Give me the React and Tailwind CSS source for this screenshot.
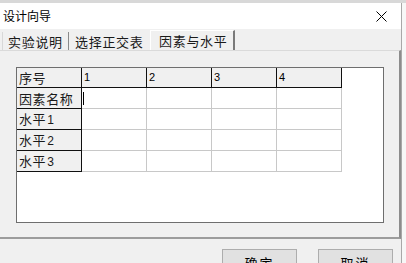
import React from 'react';

const cjk = "font-['Noto_Sans_CJK_SC',sans-serif]";
const cols = ['1', '2', '3', '4'];
const rows = [
    { label: '因素名称' },
    { label: '水平', n: '1' },
    { label: '水平', n: '2' },
    { label: '水平', n: '3' },
];

const FixedCell = ({ children, h }) => (
    <div className={`w-[65px] ${h} shrink-0 bg-[#f0f0f0] border-r border-b border-[#101010] pl-[2px] flex items-center text-[13px] tracking-[0.6px] leading-none text-[#1a1a1a]`}>
        <span>{children}</span>
    </div>
);

const App = () => {
    return (
        <div className={`w-[406px] h-[263px] overflow-hidden bg-[#f7f7f7] ${cjk}`}>
            <div className="h-[3px] bg-[#d8d8d8]" />
            <div className="w-[402px] border-r border-[#a8a8a8]">
                {/* title */}
                <div className="h-[26px] bg-white flex items-center justify-between pl-[3px] pr-[14px]">
                    <span className="text-[12px] leading-none text-black">设计向导</span>
                    <svg width="11" height="11" viewBox="0 0 11 11">
                        <path d="M0.5 0.5 L10.5 10.5 M10.5 0.5 L0.5 10.5" stroke="#000" strokeWidth="1" />
                    </svg>
                </div>
                {/* tabs */}
                <div className="h-[21px] bg-[#f0f0f0] flex items-end pl-[2px] text-[13px] tracking-[0.7px] leading-none text-[#1a1a1a]">
                    <div className="w-[67px] h-[18px] pl-[5px] flex items-center border-l border-l-[#d8d8d8] border-r border-r-[#8a8a8a]">实验说明</div>
                    <div className="w-[81px] h-[18px] pl-[6px] flex items-center">选择正交表</div>
                    <div className="w-[85px] h-[20px] pl-[8px] flex items-center border-l border-l-white border-t border-t-white border-r-2 border-r-[#7a7a7a]">因素与水平</div>
                </div>
                {/* panel */}
                <div className="w-[401px] h-[189px] bg-[#f0f0f0] border-t border-[#dadada] border-r-2 border-r-[#8c8c8c] border-b-2 border-b-[#9c9c9c] pt-[16px] pl-[16px]">
                    <div className="w-[368px] h-[156px] bg-white border border-[#6e6e6e]">
                        <div className="flex">
                            <FixedCell h="h-[20px]">序号</FixedCell>
                            {cols.map(c => (
                                <div key={c} className="w-[65px] h-[20px] bg-[#f0f0f0] border-r border-b border-[#101010] pl-[2px] flex items-center font-['Liberation_Sans',sans-serif] text-[11px] leading-none text-black">{c}</div>
                            ))}
                        </div>
                        {rows.map((r, i) => (
                            <div key={i} className="flex">
                                <FixedCell h="h-[21px]">
                                    {r.label}
                                    {r.n && <span className="font-['Liberation_Sans',sans-serif] text-[12px] tracking-normal ml-[1px]">{r.n}</span>}
                                </FixedCell>
                                {cols.map(c => (
                                    <div key={c} className="w-[65px] h-[21px] border-r border-b border-[#c8c8c8] pl-[1px] flex items-center">
                                        {i === 0 && c === '1' && <div className="w-px h-[13px] bg-black" />}
                                    </div>
                                ))}
                            </div>
                        ))}
                    </div>
                </div>
                {/* buttons */}
                <div className="h-[24px] bg-[#f0f0f0] flex items-start pt-[10px] pl-[222px] gap-[21px] text-[13px] leading-none text-black">
                    <div className="w-[75px] h-[23px] shrink-0 bg-[#e1e1e1] border border-[#adadad] flex justify-center pt-[6px] tracking-[2px]">确定</div>
                    <div className="w-[75px] h-[23px] shrink-0 bg-[#e1e1e1] border border-[#adadad] flex justify-center pt-[6px] tracking-[2px]">取消</div>
                </div>
            </div>
        </div>
    );
};

export default App;
